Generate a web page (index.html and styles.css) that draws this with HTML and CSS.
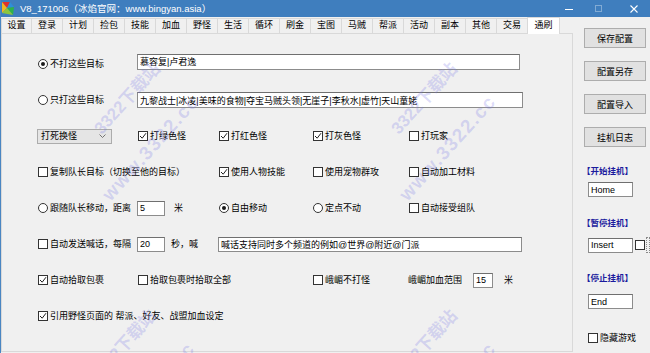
FILE: index.html
```html
<!DOCTYPE html>
<html lang="zh-CN">
<head>
    <meta charset="UTF-8">
    <meta name="viewport" content="width=device-width, initial-scale=1.0">
    <title>V8_171006</title>
    <link rel="stylesheet" href="styles.css">
</head>
<body>
<div class="window">
    <div class="titlebar">
        <svg class="app-icon" width="12" height="13" viewBox="0 0 12 13">
            <polygon points="0,0 8,0 5,6" fill="#e2312b"/>
            <polygon points="8,0 12,5 5,6" fill="#2f8fd8"/>
            <polygon points="12,5 11,13 5,6" fill="#2db34a"/>
            <polygon points="0,0 5,6 0,11" fill="#f4b71f"/>
            <polygon points="0,11 5,6 11,13" fill="#8cc63e"/>
        </svg>
        <span class="title">V8_171006（冰焰官网：www.bingyan.asia）</span>
        <div class="caption">
            <span class="cap-min"></span>
            <span class="cap-max"></span>
            <svg class="cap-close" width="8" height="8" viewBox="0 0 8 8">
                <path d="M0.5 0.5 L7.5 7.5 M7.5 0.5 L0.5 7.5" stroke="#fff" stroke-width="1.1"/>
            </svg>
        </div>
    </div>

    <div class="content">
        <div class="main">
            <div class="tabs">
                <span class="tab">设置</span>
                <span class="tab">登录</span>
                <span class="tab">计划</span>
                <span class="tab">捡包</span>
                <span class="tab">技能</span>
                <span class="tab">加血</span>
                <span class="tab">野怪</span>
                <span class="tab">生活</span>
                <span class="tab">循环</span>
                <span class="tab">刷金</span>
                <span class="tab">宝图</span>
                <span class="tab">马贼</span>
                <span class="tab">帮派</span>
                <span class="tab">活动</span>
                <span class="tab">副本</span>
                <span class="tab">其他</span>
                <span class="tab">交易</span>
                <span class="tab active">通刷</span>
            </div>

            <div class="panel">
                <div class="form-grid">
                    <!-- 目标 -->
                    <label class="opt"><span class="radio on"></span>不打这些目标</label>
                    <input class="field target-1" value="慕容复|卢君逸">

                    <label class="opt"><span class="radio"></span>只打这些目标</label>
                    <input class="field target-2" value="九黎战士|冰凌|美味的食物|夺宝马贼头领|无崖子|李秋水|虚竹|天山童姥">

                    <!-- 怪物颜色 -->
                    <div class="combo">
                        <span>打死换怪</span>
                        <svg width="7" height="4" viewBox="0 0 7 4"><path d="M0.5 0.5 L3.5 3.5 L6.5 0.5" fill="none" stroke="#666" stroke-width="0.9"/></svg>
                    </div>
                    <label class="opt"><span class="box on"><svg width="8" height="8" viewBox="0 0 8 8"><path d="M1 4 L3.2 6.2 L7 1.2" fill="none" stroke="#222" stroke-width="1"/></svg></span>打绿色怪</label>
                    <label class="opt"><span class="box on"><svg width="8" height="8" viewBox="0 0 8 8"><path d="M1 4 L3.2 6.2 L7 1.2" fill="none" stroke="#222" stroke-width="1"/></svg></span>打红色怪</label>
                    <label class="opt"><span class="box on"><svg width="8" height="8" viewBox="0 0 8 8"><path d="M1 4 L3.2 6.2 L7 1.2" fill="none" stroke="#222" stroke-width="1"/></svg></span>打灰色怪</label>
                    <label class="opt"><span class="box"></span>打玩家</label>

                    <!-- 技能 -->
                    <label class="opt span-2"><span class="box"></span>复制队长目标（切换至他的目标）</label>
                    <label class="opt"><span class="box on"><svg width="8" height="8" viewBox="0 0 8 8"><path d="M1 4 L3.2 6.2 L7 1.2" fill="none" stroke="#222" stroke-width="1"/></svg></span>使用人物技能</label>
                    <label class="opt"><span class="box"></span>使用宠物群攻</label>
                    <label class="opt"><span class="box"></span>自动加工材料</label>

                    <!-- 移动 -->
                    <label class="opt"><span class="radio"></span>跟随队长移动，距离</label>
                    <div class="inline">
                        <input class="num w-28" value="5">
                        <span>米</span>
                    </div>
                    <label class="opt"><span class="radio on"></span>自由移动</label>
                    <label class="opt"><span class="radio"></span>定点不动</label>
                    <label class="opt"><span class="box"></span>自动接受组队</label>

                    <!-- 喊话 -->
                    <label class="opt"><span class="box"></span>自动发送喊话，每隔</label>
                    <div class="inline gap-6">
                        <input class="num w-28" value="20">
                        <span>秒，喊</span>
                    </div>
                    <input class="field shout" value="喊话支持同时多个频道的例如@世界@附近@门派">

                    <!-- 拾取 -->
                    <label class="opt"><span class="box on"><svg width="8" height="8" viewBox="0 0 8 8"><path d="M1 4 L3.2 6.2 L7 1.2" fill="none" stroke="#222" stroke-width="1"/></svg></span>自动拾取包裹</label>
                    <label class="opt span-2"><span class="box"></span>拾取包裹时拾取全部</label>
                    <label class="opt"><span class="box"></span>峨嵋不打怪</label>
                    <div class="inline gap-11">
                        <span>峨嵋加血范围</span>
                        <input class="num w-20" value="15">
                        <span>米</span>
                    </div>

                    <label class="opt span-all"><span class="box on"><svg width="8" height="8" viewBox="0 0 8 8"><path d="M1 4 L3.2 6.2 L7 1.2" fill="none" stroke="#222" stroke-width="1"/></svg></span>引用野怪页面的 帮派、好友、战盟加血设定</label>
                </div>
            </div>
        </div>

        <div class="sidebar">
            <button class="btn">保存配置</button>
            <button class="btn">配置另存</button>
            <button class="btn">配置导入</button>
            <button class="btn">挂机日志</button>

            <div class="hotkey-label first">【开始挂机】</div>
            <input class="key" value="Home">

            <div class="hotkey-label second">【暂停挂机】</div>
            <div class="key-row">
                <input class="key" value="Insert">
                <span class="box"></span>
                <span class="focus-rect"></span>
            </div>

            <div class="hotkey-label third">【停止挂机】</div>
            <input class="key end" value="End">

            <label class="opt hide-game"><span class="box"></span>隐藏游戏</label>
        </div>
    </div>

    <div class="watermark">
        <div class="wm-tile tile-a"><span class="wm-name">3322下载站</span><span class="wm-url">www.3322.cc</span></div>
        <div class="wm-tile tile-b"><span class="wm-name">3322下载站</span><span class="wm-url">www.3322.cc</span></div>
        <div class="wm-tile tile-c"><span class="wm-name">3322下载站</span><span class="wm-url">www.3322.cc</span></div>
        <div class="wm-tile tile-d"><span class="wm-name">3322下载站</span><span class="wm-url">www.3322.cc</span></div>
    </div>
</div>
</body>
</html>
```

FILE: styles.css
```css
* {
    box-sizing: border-box;
}
body {
    margin: 0;
    background: #f0f0f0;
    font-family: "Liberation Sans", "Noto Sans CJK SC", sans-serif;
    font-size: 9px;
    line-height: 12px;
    color: #000;
}
.window {
    position: relative;
    width: 650px;
    height: 353px;
    overflow: hidden;
    border-left: 1px solid #4a86c2;
}

/* 标题栏 */
.titlebar {
    display: flex;
    align-items: center;
    height: 17px;
    background: #3f7ebe;
    color: #fff;
}
.app-icon {
    margin-left: 1px;
    flex-shrink: 0;
}
.title {
    margin-left: 6px;
    font-size: 9.5px;
    white-space: nowrap;
}
.caption {
    display: flex;
    align-items: center;
    margin-left: auto;
    padding-right: 12px;
}
.cap-min {
    width: 8px;
    height: 1px;
    background: #fff;
    margin-top: 2px;
}
.cap-max {
    width: 7px;
    height: 7px;
    border: 1px solid rgba(255,255,255,0.35);
    margin-left: 22px;
}
.cap-close {
    margin-left: 28px;
}

.content {
    display: flex;
    height: 336px;
}
.main {
    width: 572px;
    flex-shrink: 0;
}

/* 选项卡 */
.tabs {
    display: flex;
    align-items: flex-end;
    height: 16px;
}
.tab {
    width: 31px;
    height: 15px;
    line-height: 13px;
    text-align: center;
    border-top: 1px solid #d9d9d9;
    border-right: 1px solid #d9d9d9;
    background: #f0f0f0;
    white-space: nowrap;
}
.tab:first-child {
    border-left: 1px solid #d9d9d9;
}
.tab.active {
    position: relative;
    z-index: 1;
    width: 33px;
    height: 17px;
    margin-left: -1px;
    margin-bottom: -1px;
    line-height: 15px;
    background: #fff;
    border-left: 1px solid #d9d9d9;
}

.panel {
    height: 319px;
    border: 1px solid #d9d9d9;
    padding: 12px 0 0 35px;
}
.form-grid {
    display: grid;
    grid-template-columns: 100px 81px 94px 96px 115px;
    grid-auto-rows: 36px;
    align-items: center;
}
.span-2 {
    grid-column: span 2;
}
.span-all {
    grid-column: 1 / 6;
}

/* 单选 / 复选 */
.opt {
    display: flex;
    align-items: center;
    gap: 2px;
    white-space: nowrap;
}
.box,
.radio {
    width: 10px;
    height: 10px;
    margin-left: 1px;
    border: 1px solid #333;
    background: #fff;
    flex-shrink: 0;
    display: flex;
    align-items: center;
    justify-content: center;
}
.radio {
    border-radius: 50%;
}
.radio.on::after {
    content: "";
    width: 4px;
    height: 4px;
    border-radius: 50%;
    background: #1a1a1a;
}

/* 输入框 */
input {
    font-family: inherit;
    font-size: 9px;
    color: #000;
    margin: 0;
    padding: 0 2px;
    background: #fff;
    border: 1px solid #8c8c8c;
    border-top-color: #6f6f6f;
    outline: none;
}
.field {
    height: 16px;
    grid-column: 2 / 6;
    justify-self: start;
}
.target-1 {
    width: 383px;
    margin-top: -5px;
}
.target-2 {
    width: 386px;
}
.shout {
    grid-column: 3 / 6;
    width: 304px;
    height: 15px;
}
.num {
    height: 15px;
}
.w-28 {
    width: 28px;
}
.w-20 {
    width: 20px;
}
.inline {
    display: flex;
    align-items: center;
    gap: 9px;
    white-space: nowrap;
}
.gap-6 {
    gap: 6px;
}
.gap-11 {
    gap: 11px;
}

.combo {
    display: flex;
    align-items: center;
    justify-content: space-between;
    width: 75px;
    height: 15px;
    padding: 0 5px 0 3px;
    background: #e5e5e5;
    border: 1px solid #acacac;
}

/* 右侧 */
.sidebar {
    display: flex;
    flex-direction: column;
    align-items: flex-start;
    padding: 11px 0 0 11px;
}
.btn {
    width: 62px;
    height: 20px;
    margin: 0 0 13px 0;
    padding: 0;
    font-family: inherit;
    font-size: 9px;
    color: #000;
    background: #e1e1e1;
    border: 1px solid #adadad;
}
.hotkey-label {
    margin-left: -2px;
    font-size: 8.5px;
    font-weight: bold;
    color: #1b1b9e;
    white-space: nowrap;
}
.hotkey-label.first {
    margin-top: 5px;
}
.hotkey-label.second {
    margin-top: 20px;
}
.hotkey-label.third {
    margin-top: 19px;
}
.key {
    width: 45px;
    height: 15px;
    margin-top: 5px;
    margin-left: 4px;
}
.key-row {
    display: flex;
    align-items: center;
    gap: 1px;
    margin-top: 8px;
}
.key-row .key {
    margin-top: 0;
}
.focus-rect {
    width: 4px;
    height: 16px;
    border: 1px dotted #888;
}
.key.end {
    margin-top: 10px;
}
.hide-game {
    margin-top: 23px;
    margin-left: 3px;
}

/* 水印 */
.watermark {
    position: absolute;
    top: 0;
    left: 0;
    width: 650px;
    height: 353px;
    pointer-events: none;
    color: rgba(120, 120, 230, 0.26);
    font-weight: bold;
}
.wm-tile {
    position: absolute;
    width: 0;
    height: 0;
}
.tile-a { left: 0; top: 0; }
.tile-b { left: 297px; top: 0; }
.tile-c { left: 297px; top: 247px; }
.tile-d { left: -4px; top: 247px; }
.wm-name,
.wm-url {
    position: absolute;
    white-space: nowrap;
    line-height: 20px;
    transform-origin: 0 50%;
    transform: rotate(-48deg);
}
.wm-name {
    left: 97px;
    top: 122px;
    font-size: 17px;
}
.wm-url {
    left: 105px;
    top: 188px;
    font-size: 19px;
    letter-spacing: 1.5px;
}
```
